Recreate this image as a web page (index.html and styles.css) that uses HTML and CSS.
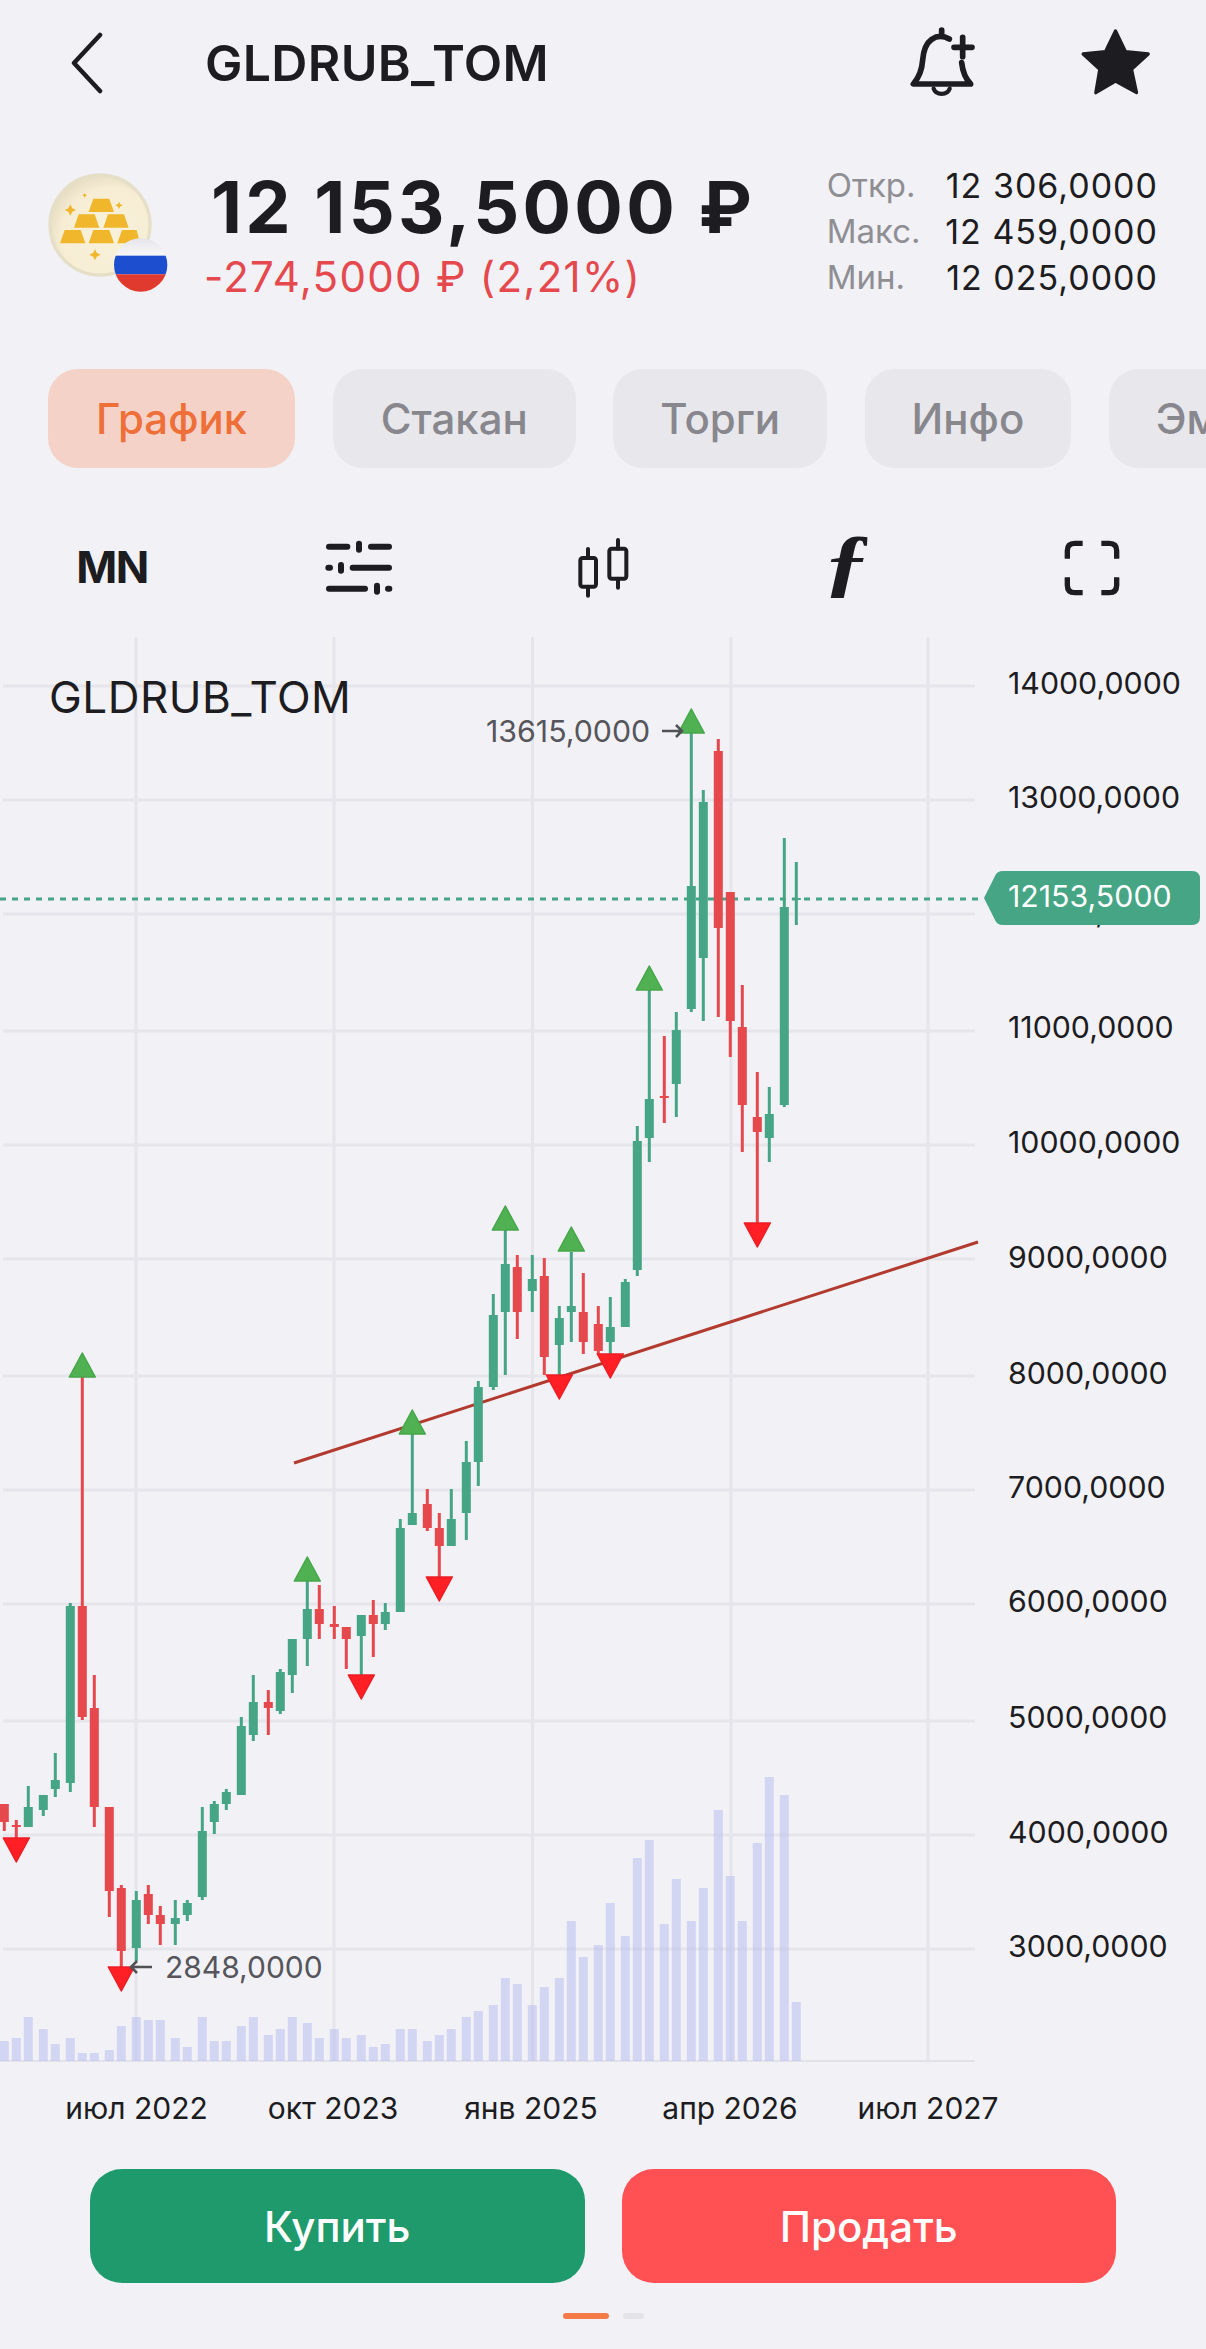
FILE: index.html
```html
<!DOCTYPE html>
<html lang="ru">
<head>
<meta charset="utf-8">
<title>GLDRUB_TOM</title>
<link rel="stylesheet" href="styles.css">
</head>
<body>
<main class="page">
  <header class="topbar">
    <svg class="back" viewBox="70 32 34 62"><path d="M100 35 L74 63 L100 91"/></svg>
    <h1 class="title">GLDRUB_TOM</h1>
    <svg class="bell" viewBox="0 -6 240 270">
      <path d="M125 30V48M148 57C130 47 110 48 95 58C75 72 70 95 68 120C66 150 55 175 40 192H212C195 175 188 155 185 128M188 52V110M162 82H216"/>
      <path class="thin" d="M101 206a25 22 0 0 0 48 0"/>
    </svg>
    <svg class="star" viewBox="520 -6 260 270"><path d="M647 33L677 95L745 102L695 148L710 218L647 183L588 218L600 148L550 102L617 95Z"/></svg>
  </header>

  <section class="quote">
    <svg class="logo" viewBox="0 0 420 405">
      <defs>
        <radialGradient id="coinFill" cx="60%" cy="62%" r="65%">
          <stop offset="0" stop-color="#f9f1da"/>
          <stop offset=".75" stop-color="#f6edd4"/>
          <stop offset="1" stop-color="#e6dcc2"/>
        </radialGradient>
        <linearGradient id="flagTop" x1="0" y1="0" x2="0" y2="1">
          <stop offset="0" stop-color="#e4e4e8"/>
          <stop offset="1" stop-color="#f9f9fb"/>
        </linearGradient>
        <clipPath id="flagClip"><circle cx="302" cy="300" r="80"/></clipPath>
      </defs>
      <circle class="coin" cx="180" cy="180" r="150"/>
      <path class="bar" d="M160 101H208L222 141H146ZM116 148H164L178 188H102ZM204 148H252L266 188H190ZM74 195H122L136 235H60ZM160 195H208L222 235H146ZM246 195H290L300 235H232Z"/>
      <path class="spark" d="M91 118L97 130L108 135L97 140L91 152L85 140L74 135L85 130ZM134 83L136 88L141 91L136 94L134 99L132 94L127 91L132 88ZM237 110L240 117L248 121L240 125L237 132L234 125L226 121L234 117ZM165 252L170 263L182 269L170 275L165 286L160 275L148 269L160 263Z"/>
      <g clip-path="url(#flagClip)">
        <rect class="flag-w" x="220" y="218" width="164" height="56"/>
        <rect class="flag-b" x="220" y="272" width="164" height="56"/>
        <rect class="flag-r" x="220" y="328" width="164" height="54"/>
      </g>
    </svg>
    <div class="price-block">
      <div class="price">12 153,5000 ₽</div>
      <div class="change">-274,5000 ₽ (2,21%)</div>
    </div>
    <dl class="stats">
      <dt>Откр.</dt><dd>12 306,0000</dd>
      <dt>Макс.</dt><dd>12 459,0000</dd>
      <dt>Мин.</dt><dd>12 025,0000</dd>
    </dl>
  </section>

  <nav class="tabs">
    <div class="tab active">График</div>
    <div class="tab">Стакан</div>
    <div class="tab">Торги</div>
    <div class="tab">Инфо</div>
    <div class="tab">Эмитент</div>
  </nav>

  <div class="toolbar">
    <div class="tool mn">MN</div>
    <svg class="tool icon" viewBox="21 0 240 240"><path d="M57 50H112M147 41V59M183 50H237M55 113H60M93 105V122M128 113H237M57 176H165M201 167V185M234 176H238"/></svg>
    <svg class="tool icon thin-icon" viewBox="756 0 240 240"><rect x="811" y="84" width="47" height="86" rx="7"/><rect x="898" y="56" width="51" height="90" rx="7"/><path d="M834 57V84M834 170V197M924 30V56M924 146V173"/></svg>
    <div class="tool fx"><span class="fx-glyph">ƒ</span></div>
    <svg class="tool icon corners" viewBox="726 0 240 240"><path d="M772 86V62Q772 40 794 40H818M874 40H898Q920 40 920 62V86M772 142V166Q772 188 794 188H818M874 188H898Q920 188 920 166V142"/></svg>
  </div>

  <div class="chart">
    <svg class="plot" viewBox="0 630 1206 1510">
      <path class="grid" d="M3 686H975M3 800H975M3 914H975M3 1031H975M3 1145H975M3 1259H975M3 1376H975M3 1490H975M3 1604H975M3 1721H975M3 1835H975M3 1949H975M136 637V2061M334 637V2061M532.5 637V2061M731 637V2061M928 637V2061"/>
      <path class="baseline" d="M0 2061H975"/>
      <path class="vol" d="M4.3 2061V2041M16.3 2061V2038M28.3 2061V2017M43.3 2061V2029M55.3 2061V2044M70.3 2061V2038M82.3 2061V2053M94.3 2061V2053M109.3 2061V2050M121.3 2061V2026M136.3 2061V2017M148.3 2061V2020M160.3 2061V2020M175.3 2061V2038M187.3 2061V2047M202.3 2061V2017M214.3 2061V2041M226.3 2061V2041M241.3 2061V2026M253.3 2061V2017M268.3 2061V2035M280.3 2061V2029M292.3 2061V2017M307.3 2061V2023M319.3 2061V2038M334.3 2061V2029M346.3 2061V2038M361.3 2061V2035M373.3 2061V2047M385.3 2061V2044M400.3 2061V2029M412.3 2061V2029M427.3 2061V2041M439.3 2061V2035M451.3 2061V2029M466.3 2061V2017M478.3 2061V2011M493.3 2061V2005M505.3 2061V1978M517.3 2061V1984M532.3 2061V2005M544.3 2061V1987M559.3 2061V1978M571.3 2061V1921M583.3 2061V1957M598.3 2061V1945M610.3 2061V1903M625.3 2061V1936M637.3 2061V1858M649.3 2061V1840M664.3 2061V1924M676.3 2061V1879M691.3 2061V1921M703.3 2061V1888M718.3 2061V1810M730.3 2061V1876M742.3 2061V1921M757.3 2061V1843M769.3 2061V1777M784.3 2061V1795M796.3 2061V2002"/>
      <path class="trend" d="M294 1463L978 1242"/>
      <path class="dash" d="M0 899H979"/>

      <path class="wick up" d="M28.3 1786V1827M43.3 1795V1816M55.3 1753V1797M70.3 1603V1792M136.3 1891V1961M175.3 1900V1945M187.3 1900V1921M202.3 1807V1900M214.3 1801V1834M226.3 1789V1810M241.3 1717V1795M253.3 1675V1741M280.3 1669V1714M292.3 1639V1693M307.3 1581V1666M361.3 1615V1675M385.3 1603V1630M400.3 1519V1612M412.3 1433V1525M451.3 1489V1546M466.3 1441V1540M478.3 1381V1486M493.3 1294V1390M505.3 1230V1375M532.3 1255V1312M559.3 1306V1377M571.3 1252V1342M610.3 1297V1355M625.3 1279V1327M637.3 1126V1276M649.3 990V1162M676.3 1012V1117M691.3 733V1012M703.3 790V1021M769.3 1087V1162M784.3 838V1107M796.3 862V925"/>
      <path class="body up" d="M28.3 1807V1827M43.3 1795V1810M55.3 1780V1789M70.3 1606V1783M136.3 1900V1948M175.3 1918V1924M187.3 1903V1915M202.3 1831V1897M214.3 1804V1822M226.3 1792V1804M241.3 1726V1795M253.3 1702V1735M280.3 1672V1711M292.3 1639V1675M307.3 1609V1639M361.3 1615V1636M385.3 1612V1624M400.3 1528V1612M412.3 1513V1525M451.3 1519V1546M466.3 1462V1513M478.3 1387V1462M493.3 1315V1387M505.3 1264V1312M532.3 1279V1291M559.3 1318V1345M571.3 1306V1312M610.3 1327V1342M625.3 1282V1327M637.3 1141V1270M649.3 1099V1138M676.3 1030V1084M691.3 886V1009M703.3 802V958M769.3 1114V1138M784.3 907V1105M796.3 898V900"/>
      <path class="wick down" d="M4.3 1804V1831M16.3 1820V1838M82.3 1377V1720M94.3 1675V1827M109.3 1807V1917M121.3 1885V1968M148.3 1885V1924M160.3 1906V1945M268.3 1690V1735M319.3 1585V1639M334.3 1606V1639M346.3 1627V1669M373.3 1600V1657M427.3 1489V1531M439.3 1513V1577M517.3 1255V1339M544.3 1258V1375M583.3 1273V1354M598.3 1306V1355M664.3 1036V1123M718.3 739V1017M730.3 892V1057M742.3 985V1152M757.3 1072V1223"/>
      <path class="body down" d="M4.3 1804V1822M16.3 1825V1827M82.3 1606V1717M94.3 1708V1807M109.3 1807V1891M121.3 1888V1951M148.3 1894V1915M160.3 1915V1924M268.3 1702V1708M319.3 1609V1624M334.3 1624V1627M346.3 1627V1639M373.3 1615V1624M427.3 1504V1528M439.3 1528V1546M517.3 1267V1312M544.3 1276V1357M583.3 1312V1342M598.3 1324V1351M664.3 1096V1098M718.3 751V928M730.3 892V1021M742.3 1027V1105M757.3 1117V1132"/>

      <path class="mark-up" d="M82.3 1353l13 24h-26zM307.3 1557l13 24h-26zM412.3 1410l13 24h-26zM505.3 1206l13 24h-26zM571.3 1227l13 24h-26zM649.3 966l13 24h-26zM691.3 709l13 24h-26z"/>
      <path class="mark-down" d="M16.3 1862l13-24h-26zM121.3 1991l13-24h-26zM361.3 1699l13-24h-26zM439.3 1601l13-24h-26zM559.3 1399l13-24h-26zM610.3 1378l13-24h-26zM757.3 1247l13-24h-26z"/>

      <path class="pointer" d="M662 731H682M676 725L682 731L676 737M152 1967H131M137 1961L131 1967L137 1973"/>
      <text class="note" x="486" y="742">13615,0000</text>
      <text class="note short" x="165" y="1978">2848,0000</text>
      <text class="symbol" x="49" y="713">GLDRUB_TOM</text>

      <text class="axis" x="1008" y="694">14000,0000</text>
      <text class="axis" x="1008" y="808">13000,0000</text>
      <text class="axis" x="1008" y="922">12000,0000</text>
      <text class="axis" x="1008" y="1038">11000,0000</text>
      <text class="axis" x="1008" y="1153">10000,0000</text>
      <text class="axis" x="1008" y="1268">9000,0000</text>
      <text class="axis" x="1008" y="1384">8000,0000</text>
      <text class="axis" x="1008" y="1498">7000,0000</text>
      <text class="axis" x="1008" y="1612">6000,0000</text>
      <text class="axis" x="1008" y="1728">5000,0000</text>
      <text class="axis" x="1008" y="1843">4000,0000</text>
      <text class="axis" x="1008" y="1957">3000,0000</text>

      <path class="bubble" d="M984 898L995 876Q997 871 1003 871H1192Q1200 871 1200 879V917Q1200 925 1192 925H1003Q997 925 995 920Z"/>
      <text class="bubble-text" x="1008" y="907">12153,5000</text>

      <text class="date" x="136.5" y="2119">июл 2022</text>
      <text class="date" x="333" y="2119">окт 2023</text>
      <text class="date" x="531" y="2119">янв 2025</text>
      <text class="date" x="730" y="2119">апр 2026</text>
      <text class="date" x="928" y="2119">июл 2027</text>
    </svg>
  </div>

  <div class="actions">
    <button class="btn buy">Купить</button>
    <button class="btn sell">Продать</button>
  </div>

  <div class="pager"><span class="dot on"></span><span class="dot"></span></div>
</main>
</body>
</html>
```
FILE: styles.css
```css
* { box-sizing: border-box; }
html, body { margin: 0; padding: 0; }
body {
  background: #f1f1f6;
  color: #1c1c21;
  font-family: Inter, "Liberation Sans", sans-serif;
}
.page {
  width: 1206px;
  height: 2349px;
  overflow: hidden;
  display: flex;
  flex-direction: column;
}
svg { display: block; flex: none; }

.topbar {
  display: flex;
  align-items: center;
  height: 90px;
  margin-top: 18px;
  padding: 0 46px 0 70px;
}
.back { width: 34px; height: 62px; fill: none; stroke: #1c1c21; stroke-width: 4.5; stroke-linecap: round; stroke-linejoin: round; }
.title { margin: 0 0 0 101px; font-size: 50px; line-height: 58px; font-weight: 600; letter-spacing: 0.3px; flex: 1; }
.bell { width: 80px; height: 90px; fill: none; stroke: #1c1c21; stroke-width: 17; stroke-linecap: round; stroke-linejoin: round; margin-right: 93px; }
.bell .thin { stroke-width: 13; }
.star { width: 87px; height: 90px; fill: #1c1c21; stroke: #1c1c21; stroke-width: 10; stroke-linejoin: round; }

.quote {
  display: flex;
  align-items: flex-start;
  height: 135px;
  margin-top: 57px;
  padding: 0 48px 0 40px;
}
.logo { width: 140px; height: 135px; margin-right: 24px; }
.coin { fill: url(#coinFill); stroke: #e6dfc8; stroke-width: 10; }
.bar { fill: #f0b72d; }
.spark { fill: #f0b72d; }
.flag-w { fill: url(#flagTop); }
.flag-b { fill: #1d4ed0; }
.flag-r { fill: #e03a2e; }
.price-block { flex: 1; padding-top: 5px; }
.price { font-size: 72px; line-height: 74px; font-weight: 700; letter-spacing: 3.3px; padding-left: 7px; white-space: nowrap; }
.change { font-size: 42px; line-height: 50px; margin-top: 8px; letter-spacing: 1.3px; color: #e5484d; white-space: nowrap; }
.stats {
  display: grid;
  grid-template-columns: 118.5px auto;
  grid-auto-rows: 46px;
  align-items: center;
  margin: -3px 0 0;
}
.stats dt { color: #8e8e93; font-size: 33px; }
.stats dd { margin: 0; font-size: 34px; letter-spacing: 1px; text-align: right; white-space: nowrap; }

.tabs {
  display: flex;
  gap: 37.5px;
  margin-top: 69px;
  padding-left: 48px;
}
.tab {
  flex: none;
  height: 99px;
  display: flex;
  align-items: center;
  padding: 0 48px;
  border-radius: 30px;
  background: #e7e7ec;
  color: #87878d;
  font-size: 42px;
  font-weight: 500;
}
.tab:nth-child(n+3) { padding: 0 47px; }
.tab.active { background: #f5d2c8; color: #ee7038; }

.toolbar {
  display: flex;
  justify-content: space-between;
  height: 80px;
  margin-top: 62px;
  padding: 0 74px 0 72px;
}
.tool { width: 80px; height: 80px; flex: none; }
.mn { font-size: 44px; font-weight: 700; line-height: 74px; text-align: center; letter-spacing: -1.5px; }
.fx { display: flex; justify-content: center; }
.fx-glyph { font-family: "Liberation Serif", serif; font-style: italic; font-weight: 700; font-size: 76px; line-height: 63px; transform: scaleX(1.25); }
.icon { fill: none; stroke: #1c1c21; stroke-width: 18; stroke-linecap: round; }
.thin-icon { stroke-width: 12; }
.corners { stroke-width: 16; stroke-linecap: butt; }

.chart { height: 1510px; margin-top: 20px; }
.plot { width: 1206px; height: 1510px; font-family: Inter, "Liberation Sans", sans-serif; }
.grid { fill: none; stroke: #e5e5eb; stroke-width: 3; }
.baseline { fill: none; stroke: #dcdce6; stroke-width: 1.5; }
.vol { fill: none; stroke: #acb5ef; stroke-opacity: .45; stroke-width: 9; }
.trend { fill: none; stroke: #b23a2e; stroke-width: 3; }
.dash { fill: none; stroke: #45a585; stroke-width: 3; stroke-dasharray: 6 6; }
.wick, .body { fill: none; }
.wick { stroke-width: 3; }
.body { stroke-width: 9; }
.up { stroke: #45a585; }
.down { stroke: #e5484d; }
.mark-up { fill: #4fb152; stroke: #46a64a; stroke-width: 1.5; stroke-linejoin: round; }
.mark-down { fill: #ff1f24; stroke: #ec1e24; stroke-width: 1.5; stroke-linejoin: round; }
.pointer { fill: none; stroke: #505056; stroke-width: 2.5; }
.note { font-size: 30.3px; fill: #55555b; }
.note.short { font-size: 30px; }
.symbol { font-size: 44px; letter-spacing: 0.5px; fill: #1c1c21; }
.axis { font-size: 30.3px; fill: #1c1c21; }
.bubble { fill: #45a585; }
.bubble-text { font-size: 30.3px; fill: #ffffff; }
.date { font-size: 30px; fill: #1c1c21; text-anchor: middle; }

.actions {
  display: flex;
  gap: 37px;
  margin-top: 29px;
  padding: 0 90px;
}
.btn {
  flex: 1;
  height: 114px;
  border: 0;
  border-radius: 32px;
  color: #fff;
  font-family: Inter, "Liberation Sans", sans-serif;
  font-size: 42px;
  font-weight: 500;
}
.buy { background: #1e9a6c; }
.sell { background: #ff5053; }

.pager {
  display: flex;
  justify-content: center;
  gap: 14px;
  margin-top: 30px;
}
.dot { width: 21px; height: 6px; border-radius: 3px; background: #e3e3e8; }
.dot.on { width: 46px; background: #f47b45; }
```
